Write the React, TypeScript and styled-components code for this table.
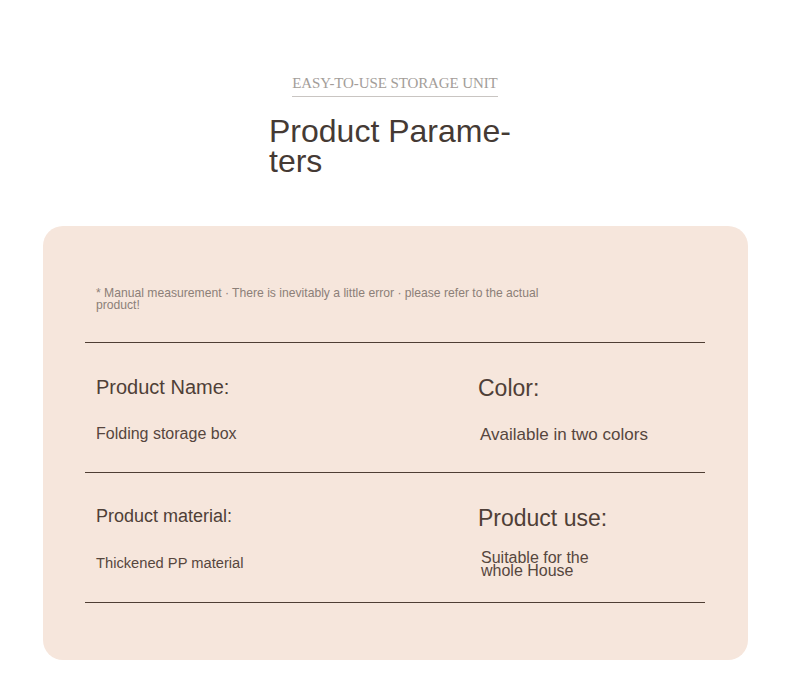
import styled, { createGlobalStyle } from 'styled-components';

const GlobalStyle = createGlobalStyle`
  body {
    margin: 0;
    background: #ffffff;
    font-family: 'Liberation Sans', Arial, sans-serif;
  }
`;

type Param = {
  label: string;
  labelSize: number;
  value: string;
  valueSize: number;
  valueLh?: number;
  nudge?: number;
  narrow?: boolean;
};

const rows: Param[][] = [
  [
    { label: 'Product Name:', labelSize: 20, value: 'Folding storage box', valueSize: 16 },
    { label: 'Color:', labelSize: 23, value: 'Available in two colors', valueSize: 17, nudge: 2 },
  ],
  [
    { label: 'Product material:', labelSize: 18, value: 'Thickened PP material', valueSize: 14.7 },
    {
      label: 'Product use:',
      labelSize: 23,
      value: 'Suitable for the whole House',
      valueSize: 16,
      valueLh: 12.5,
      nudge: 3,
      narrow: true,
    },
  ],
];

function App() {
  return (
    <>
      <GlobalStyle />
      <Page>
        <Header>
          <Kicker>EASY-TO-USE STORAGE UNIT</Kicker>
          <Title>Product Parame&shy;ters</Title>
        </Header>

        <Card>
          <Note>
            * Manual measurement · There is inevitably a little error · please refer to the actual product!
          </Note>
          <Table>
            {rows.map((row, i) => (
              <Row key={i}>
                {row.map((p) => (
                  <Label key={p.label} $size={p.labelSize}>
                    {p.label}
                  </Label>
                ))}
                {row.map((p) => (
                  <Value
                    key={p.value}
                    $size={p.valueSize}
                    $lh={p.valueLh ?? p.valueSize}
                    $nudge={p.nudge ?? 0}
                    $narrow={!!p.narrow}
                  >
                    {p.value}
                  </Value>
                ))}
              </Row>
            ))}
          </Table>
        </Card>
      </Page>
    </>
  );
}

const Page = styled.div`
  width: 790px;
  padding-top: 76px;
`;

const Header = styled.header`
  display: flex;
  flex-direction: column;
  align-items: center;
`;

const Kicker = styled.div`
  font-family: 'Liberation Serif', 'Times New Roman', serif;
  font-size: 15px;
  line-height: 15px;
  letter-spacing: -0.1px;
  color: #a39d99;
  padding-bottom: 5px;
  border-bottom: 1px solid #c9c5c2;
`;

const Title = styled.h1`
  width: 252px;
  margin: 19px 0 0;
  font-family: 'Liberation Sans', Arial, sans-serif;
  font-size: 32px;
  font-weight: 400;
  line-height: 30px;
  color: #453a34;
  hyphens: manual;
`;

const Card = styled.section`
  margin: 50px 42px 0 43px;
  padding: 61px 43px 57px 42px;
  background: #f6e6dc;
  border-radius: 20px;
`;

const Note = styled.p`
  margin: 0 0 0 11px;
  max-width: 470px;
  font-size: 12.15px;
  line-height: 12px;
  color: #8c7f78;
`;

const Table = styled.div`
  margin-top: 31px;
  border-top: 1px solid #4f3e34;
`;

const Row = styled.div`
  display: grid;
  grid-template-columns: 382px 1fr;
  grid-template-rows: 49px auto;
  box-sizing: border-box;
  height: 130px;
  padding: 34px 0 0 11px;
  border-bottom: 1px solid #4f3e34;
`;

const Label = styled.div<{ $size: number }>`
  font-size: ${(p) => p.$size}px;
  line-height: 1;
  color: #4f3f37;
`;

const Value = styled.div<{ $size: number; $lh: number; $nudge: number; $narrow: boolean }>`
  font-size: ${(p) => p.$size}px;
  line-height: ${(p) => p.$lh}px;
  margin-top: ${(p) => (p.$narrow ? -4 : 0)}px;
  padding-left: ${(p) => p.$nudge}px;
  max-width: ${(p) => (p.$narrow ? '130px' : 'none')};
  color: #56463e;
`;

export default App;
